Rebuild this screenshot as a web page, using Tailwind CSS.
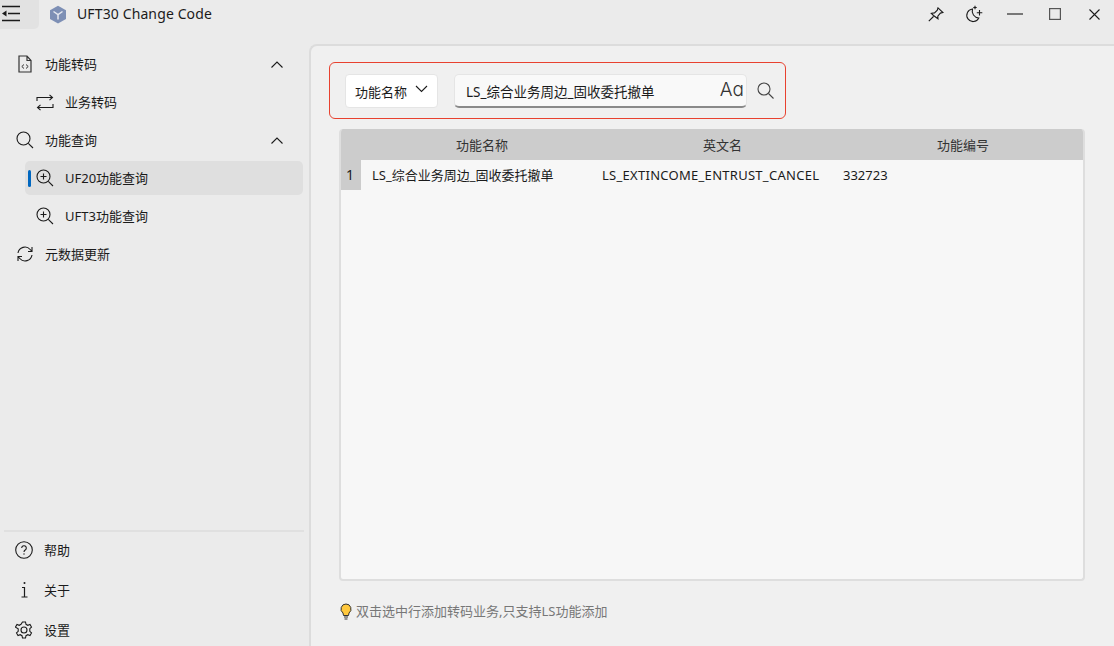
<!DOCTYPE html>
<html lang="zh">
<head>
    <meta charset="UTF-8">
    <title>UFT30 Change Code</title>
    <script src="https://cdn.jsdelivr.net/npm/@tailwindcss/browser@4"></script>
</head>
<body class="w-[1114px] h-[646px] overflow-hidden bg-[#ebebeb] text-[13px] leading-[18px] text-[#1b1b1b] font-['Noto_Sans','Noto_Sans_CJK_SC',sans-serif]">

    <!-- title bar -->
    <header class="h-[44px] flex items-start">
        <button class="w-[39px] h-[29px] bg-[#e2e2e2] rounded-br-[5px] flex items-start pl-[2px] pt-[4px]">
            <svg width="19" height="18" viewBox="0 0 19 18" fill="none" stroke="#1b1b1b" stroke-width="1.700">
                <path d="M0 2.500h18M6 9.500h12M0 16.500h18"/>
                <path d="M4.500 6.500v6L0 9.500z" fill="#1b1b1b" stroke="none"/>
            </svg>
        </button>
        <svg class="ml-[10px] mt-[5px]" width="18" height="19" viewBox="0 0 18 19">
            <path d="M9 .8l8 4.500v8.600l-8 4.500-8-4.500V5.300z" fill="#7d8fb5"/>
            <path d="M4.500 6.500L9 9.500l4.500-3M9 9.500v5" fill="none" stroke="#e6e9f0" stroke-width="1.500"/>
        </svg>
        <span class="ml-[10px] mt-[5px] text-[14px] tracking-[0.12px]">UFT30 Change Code</span>
        <div class="ml-auto flex items-center h-[28px]">
            <svg class="mr-[21px]" width="16" height="15" viewBox="0 0 16 15" fill="none" stroke="#1b1b1b" stroke-width="1.100"><path d="M10 .8l5 4.700-2.600.6-2.600 3 .2 2.700L5.500 8.500 3.300 6.300l3.200-.4 2.800-2.700zM5.500 9.500L.8 14.200"/></svg>
            <svg class="mr-[24px]" width="18" height="18" viewBox="0 0 18 18" fill="none" stroke="#1b1b1b" stroke-width="1.100"><path d="M7.500 4a6.300 6.300 0 1 0 6.300 9A7 7 0 0 1 7.500 4z"/><path d="M10 .8v3.400M8.300 2.500h3.400M14.500 5v5.500M11.800 7.800h5.500"/></svg>
            <svg class="mr-[26px]" width="16" height="2" viewBox="0 0 16 2"><path d="M0 1h16" stroke="#1b1b1b" stroke-width="1.100"/></svg>
            <svg class="mr-[28px]" width="12" height="12" viewBox="0 0 12 12" fill="none"><rect x=".6" y=".6" width="10.800" height="10.800" stroke="#555" stroke-width="1.200"/></svg>
            <svg class="mr-[14px]" width="11" height="11" viewBox="0 0 11 11" fill="none" stroke="#1b1b1b" stroke-width="1.100"><path d="M.5.500l10 10M10.500.500l-10 10"/></svg>
        </div>
    </header>

    <div class="flex h-[602px]">
        <!-- sidebar -->
        <aside class="w-[309px] shrink-0 flex flex-col">
            <nav class="flex-1 pt-[1px] pr-[6px]">
                <div class="h-[38px] flex items-center pl-[18px]">
                    <svg width="14" height="18" viewBox="0 0 14 18" fill="none" stroke="#333" stroke-width="1.200"><path d="M1 1h8l4 4.500V17H1zM9 1v4.500h4"/><path d="M6 9.500L3.800 11.500 6 13.500M8 9.500l2.200 2L8 13.500" stroke-width="1"/></svg>
                    <span class="ml-[13px]">功能转码</span>
                    <svg class="ml-auto mr-[20px]" width="12" height="7" viewBox="0 0 12 7" fill="none" stroke="#1b1b1b" stroke-width="1.100"><path d="M.5 6.500L6 1l5.500 5.500"/></svg>
                </div>
                <div class="h-[38px] flex items-center pl-[36px]">
                    <svg width="18" height="17" viewBox="0 0 18 17" fill="none" stroke="#1b1b1b" stroke-width="1.100"><path d="M1 7V3.500h15.500M13.500 .8l3 2.700-3 2.700M17 10v3.500H1.500M4.500 10.800l-3 2.700 3 2.700"/></svg>
                    <span class="ml-[11px]">业务转码</span>
                </div>
                <div class="h-[38px] flex items-center pl-[16px]">
                    <svg width="18" height="18" viewBox="0 0 18 18" fill="none" stroke="#1b1b1b" stroke-width="1.100"><circle cx="7.500" cy="7.500" r="6.500"/><path d="M12.300 12.300L17 17"/></svg>
                    <span class="ml-[11px]">功能查询</span>
                    <svg class="ml-auto mr-[20px]" width="12" height="7" viewBox="0 0 12 7" fill="none" stroke="#1b1b1b" stroke-width="1.100"><path d="M.5 6.500L6 1l5.500 5.500"/></svg>
                </div>
                <div class="h-[38px] flex items-center pl-[25px]">
                    <div class="w-full h-[34px] bg-[#dfdfdf] rounded-[5px] flex items-center pl-[3px]">
                        <span class="w-[3px] h-[17px] rounded-full bg-[#0067c0]"></span>
                        <svg class="ml-[5px]" width="18" height="18" viewBox="0 0 18 18" fill="none" stroke="#1b1b1b" stroke-width="1.100"><circle cx="7.500" cy="7.500" r="6.500"/><path d="M12.300 12.300L17 17M7.500 4.500v6M4.500 7.500h6"/></svg>
                        <span class="ml-[11px]">UF20功能查询</span>
                    </div>
                </div>
                <div class="h-[38px] flex items-center pl-[36px]">
                    <svg width="18" height="18" viewBox="0 0 18 18" fill="none" stroke="#1b1b1b" stroke-width="1.100"><circle cx="7.500" cy="7.500" r="6.500"/><path d="M12.300 12.300L17 17M7.500 4.500v6M4.500 7.500h6"/></svg>
                    <span class="ml-[11px]">UFT3功能查询</span>
                </div>
                <div class="h-[38px] flex items-center pl-[17px]">
                    <svg width="16" height="16" viewBox="0 0 16 16" fill="none" stroke="#1b1b1b" stroke-width="1.100"><path d="M1 7a7 7 0 0 1 12.200-3.500L15 5.500M15 1v4.500h-4M15 9a7 7 0 0 1-12.200 3.500L1 10.500M1 15v-4.500h4"/></svg>
                    <span class="ml-[12px]">元数据更新</span>
                </div>
            </nav>
            <div class="ml-[4px] mr-[5px] border-t-2 border-[#e0e0e0] h-[116px]">
                <div class="-mt-[2px]">
                    <div class="h-[40px] flex items-center pl-[11px]">
                        <svg width="18" height="18" viewBox="0 0 18 18" fill="none" stroke="#1b1b1b" stroke-width="1.100"><circle cx="9" cy="9" r="8.300"/><path d="M6.700 7a2.300 2.300 0 1 1 3.500 2c-.8.500-1.200 1-1.200 2"/><circle cx="9" cy="13" r=".7" fill="#1b1b1b" stroke="none"/></svg>
                        <span class="ml-[11px]">帮助</span>
                    </div>
                    <div class="h-[40px] flex items-center pl-[11px]">
                        <svg width="18" height="18" viewBox="0 0 18 18" fill="none" stroke="#1b1b1b" stroke-width="1.200"><circle cx="9.500" cy="2" r="1" fill="#1b1b1b" stroke="none"/><path d="M7 6.500h2.500V16M6.500 16h6"/></svg>
                        <span class="ml-[11px]">关于</span>
                    </div>
                    <div class="h-[40px] flex items-center pl-[11px]">
                        <svg width="18" height="18" viewBox="0 0 18 18" fill="none" stroke="#1b1b1b" stroke-width="1.100"><circle cx="9" cy="9" r="3"/><path d="M7.500 1h3l.5 2.300 1.800 1 2.200-.8 1.500 2.600-1.700 1.600v2.600l1.700 1.600-1.500 2.600-2.200-.8-1.800 1-.5 2.300h-3L7 14.700l-1.800-1-2.200.8-1.500-2.600 1.700-1.600V7.700L.5 6.100 2 3.500l2.200.8 1.800-1z"/></svg>
                        <span class="ml-[11px]">设置</span>
                    </div>
                </div>
            </div>
        </aside>

        <!-- content -->
        <main class="flex-1 bg-[#f0f0f0] border-l-2 border-t-2 border-[#dcdcdc] rounded-tl-[8px] pl-[18px] pr-[28px] pt-[16px]">
            <div class="w-[457px] h-[57px] border border-[#e8412f] rounded-[6px] flex items-center pl-[15px]">
                <div class="w-[93px] h-[34px] bg-white border border-[#e5e5e5] rounded-[4px] flex items-center pl-[9px]">
                    <span class="pt-[2px]">功能名称</span>
                    <svg class="ml-[8px] mb-[3px]" width="13" height="8" viewBox="0 0 13 8" fill="none" stroke="#1b1b1b" stroke-width="1.100"><path d="M1 1l5.500 5.500L12 1"/></svg>
                </div>
                <div class="ml-[16px] w-[293px] h-[34px] bg-[#f9f9f9] border border-[#e5e5e5] border-b-2 border-b-[#8a8a8a] rounded-[5px] flex items-center pl-[11px]">
                    <span class="text-[13.5px] pt-[3px]">LS_综合业务周边_固收委托撤单</span>
                    <span class="ml-auto mr-[2px] text-[19px] font-light font-['Inter',sans-serif] text-[#333]">Aɑ</span>
                </div>
                <svg class="ml-[10px]" width="17" height="17" viewBox="0 0 17 17" fill="none" stroke="#444" stroke-width="1.100"><circle cx="7" cy="7" r="6"/><path d="M11.500 11.500L16.500 16.500"/></svg>
            </div>

            <div class="ml-[10px] mt-[10px] w-[746px] h-[452px] bg-[#f7f7f7] border-2 border-t-0 border-[#dedede] rounded-[4px] overflow-hidden">
                <div class="h-[31px] bg-[#cccccc] flex items-center text-[#333]">
                    <span class="w-[283px] text-right pr-[116px]">功能名称</span>
                    <span class="w-[197px] text-center">英文名</span>
                    <span class="flex-1 text-center pl-[22px]">功能编号</span>
                </div>
                <div class="h-[30px] flex items-center">
                    <span class="w-[20px] h-full bg-[#cccccc] flex items-center justify-center pr-[2px] text-[14px]">1</span>
                    <span class="w-[241px] pl-[11px]">LS_综合业务周边_固收委托撤单</span>
                    <span class="w-[241px] tracking-[0.28px]">LS_EXTINCOME_ENTRUST_CANCEL</span>
                    <span>332723</span>
                </div>
            </div>

            <div class="ml-[11px] mt-[21px] flex items-center text-[#777]">
                <svg width="12" height="17" viewBox="0 0 12 17"><path d="M6 1a5 5 0 0 1 3 9l-.5 2.500h-5L3 10a5 5 0 0 1 3-9z" fill="#ffc83d" stroke="#333" stroke-width="1"/><path d="M4 14h4M4.500 16h3" stroke="#333" stroke-width="1.200"/></svg>
                <span class="ml-[4px]">双击选中行添加转码业务,只支持LS功能添加</span>
            </div>
        </main>
    </div>
</body>
</html>
